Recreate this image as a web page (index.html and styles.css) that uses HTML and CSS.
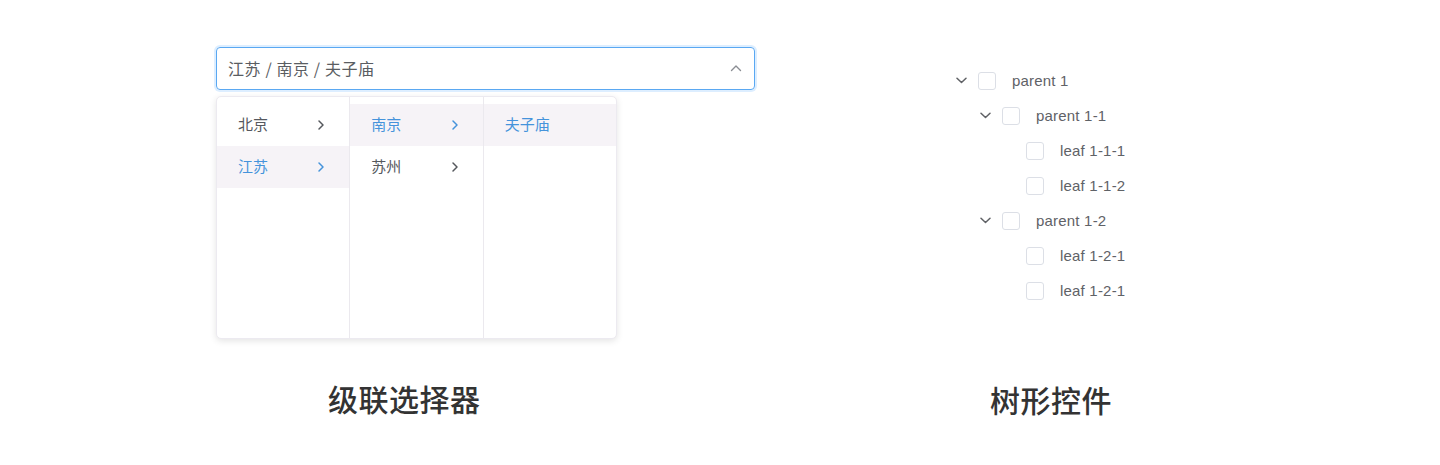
FILE: index.html
```html
<!DOCTYPE html>
<html lang="zh">
<head>
<meta charset="utf-8">
<link rel="stylesheet" href="styles.css">
</head>
<body>
<div class="page">
  <section class="demo demo-cascader">
    <div class="cascader">
      <div class="cas-input">
        <span class="cas-value">江苏 / 南京 / 夫子庙</span>
        <svg class="cas-caret" width="12" height="8" viewBox="0 0 12 8"><path d="M1.5 6.5 L6 2 L10.5 6.5" fill="none" stroke="#8a8d93" stroke-width="1.4" stroke-linecap="round" stroke-linejoin="round"/></svg>
      </div>
      <div class="cas-menu">
        <ul class="cas-col">
          <li class="cas-item"><span>北京</span><svg class="arr" width="8" height="12" viewBox="0 0 8 12"><path d="M2 2 L6 6 L2 10" fill="none" stroke="currentColor" stroke-width="1.5" stroke-linecap="round" stroke-linejoin="round"/></svg></li>
          <li class="cas-item active"><span>江苏</span><svg class="arr" width="8" height="12" viewBox="0 0 8 12"><path d="M2 2 L6 6 L2 10" fill="none" stroke="currentColor" stroke-width="1.5" stroke-linecap="round" stroke-linejoin="round"/></svg></li>
        </ul>
        <ul class="cas-col">
          <li class="cas-item active"><span>南京</span><svg class="arr" width="8" height="12" viewBox="0 0 8 12"><path d="M2 2 L6 6 L2 10" fill="none" stroke="currentColor" stroke-width="1.5" stroke-linecap="round" stroke-linejoin="round"/></svg></li>
          <li class="cas-item"><span>苏州</span><svg class="arr" width="8" height="12" viewBox="0 0 8 12"><path d="M2 2 L6 6 L2 10" fill="none" stroke="currentColor" stroke-width="1.5" stroke-linecap="round" stroke-linejoin="round"/></svg></li>
        </ul>
        <ul class="cas-col">
          <li class="cas-item active"><span>夫子庙</span></li>
        </ul>
      </div>
    </div>
    <h2 class="demo-title title-cascader">级联选择器</h2>
  </section>

  <section class="demo demo-tree">
    <ul class="tree">
      <li class="node lv0"><span class="chev"><svg width="11" height="7" viewBox="0 0 11 7"><path d="M1 1.2 L5.5 5.5 L10 1.2" fill="none" stroke="#606266" stroke-width="1.5" stroke-linecap="round" stroke-linejoin="round"/></svg></span><span class="cb"></span><span class="label">parent 1</span></li>
      <li class="node lv1"><span class="chev"><svg width="11" height="7" viewBox="0 0 11 7"><path d="M1 1.2 L5.5 5.5 L10 1.2" fill="none" stroke="#606266" stroke-width="1.5" stroke-linecap="round" stroke-linejoin="round"/></svg></span><span class="cb"></span><span class="label">parent 1-1</span></li>
      <li class="node lv2"><span class="chev"></span><span class="cb"></span><span class="label">leaf 1-1-1</span></li>
      <li class="node lv2"><span class="chev"></span><span class="cb"></span><span class="label">leaf 1-1-2</span></li>
      <li class="node lv1"><span class="chev"><svg width="11" height="7" viewBox="0 0 11 7"><path d="M1 1.2 L5.5 5.5 L10 1.2" fill="none" stroke="#606266" stroke-width="1.5" stroke-linecap="round" stroke-linejoin="round"/></svg></span><span class="cb"></span><span class="label">parent 1-2</span></li>
      <li class="node lv2"><span class="chev"></span><span class="cb"></span><span class="label">leaf 1-2-1</span></li>
      <li class="node lv2"><span class="chev"></span><span class="cb"></span><span class="label">leaf 1-2-1</span></li>
    </ul>
    <h2 class="demo-title title-tree">树形控件</h2>
  </section>
</div>
</body>
</html>
```

FILE: styles.css
```css
html, body {
  margin: 0;
  padding: 0;
  background: #ffffff;
}
body {
  width: 1440px;
  height: 465px;
  font-family: "Liberation Sans", "Noto Sans CJK SC", sans-serif;
  color: #606266;
}
ul { list-style: none; margin: 0; padding: 0; }
h2 { margin: 0; }

.page {
  display: flex;
  align-items: flex-start;
}

/* ---------- cascader ---------- */
.demo-cascader {
  margin-left: 216px;
  padding-top: 47px;
  width: 539px;
}
.cascader {
  display: flex;
  flex-direction: column;
  gap: 6px;
}
.cas-input {
  box-sizing: border-box;
  height: 43px;
  border: 1px solid #5aa8f2;
  border-radius: 4px;
  box-shadow: 0 0 0 2px rgba(64, 158, 255, 0.18);
  display: flex;
  align-items: center;
  justify-content: space-between;
  padding: 0 12px 1px 11px;
  font-family: "Noto Sans CJK SC", sans-serif;
  font-size: 16px;
  color: #5a5d62;
}
.cas-value { letter-spacing: 0.6px; }
.cas-caret { display: block; }

.cas-menu {
  box-sizing: border-box;
  width: 401px;
  height: 243px;
  display: flex;
  border: 1px solid #eceaf0;
  border-radius: 5px;
  box-shadow: 0 2px 7px rgba(0, 0, 0, 0.11);
  background: #fff;
  overflow: hidden;
}
.cas-col {
  width: 134px;
  padding-top: 7px;
  border-right: 1px solid #ebe9ee;
}
.cas-col:last-child { border-right: none; }
.cas-item {
  box-sizing: border-box;
  height: 42px;
  display: flex;
  align-items: center;
  justify-content: space-between;
  padding: 0 24px 3px 21px;
  font-family: "Noto Sans CJK SC", sans-serif;
  font-size: 15px;
  color: #55585d;
}
.cas-item .arr { display: block; color: #55585d; margin-top: 2px; }
.cas-item.active {
  background: #f6f3f7;
  color: #4593db;
}
.cas-item.active .arr { color: #4593db; }

.demo-title {
  font-family: "Noto Sans CJK SC", sans-serif;
  font-size: 30px;
  font-weight: 500;
  line-height: 30px;
  color: #333333;
}
.title-cascader {
  margin-top: 44px;
  margin-left: 112px;
  letter-spacing: 0.5px;
}

/* ---------- tree ---------- */
.demo-tree {
  margin-left: 201px;
  padding-top: 63px;
}
.tree {
  display: flex;
  flex-direction: column;
}
.node {
  height: 35px;
  display: flex;
  align-items: center;
  font-size: 15px;
  color: #5f6267;
}
.node.lv0 { padding-left: 0; }
.node.lv1 { padding-left: 24px; }
.node.lv2 { padding-left: 48px; }
.chev {
  width: 22px;
  display: flex;
  align-items: center;
  justify-content: flex-start;
}
.chev svg { display: block; }
.cb {
  box-sizing: border-box;
  width: 18px;
  height: 18px;
  border: 1px solid #dcdfe6;
  border-radius: 3px;
  background: #fff;
  margin-right: 16px;
}
.label { white-space: nowrap; letter-spacing: 0.2px; }

.title-tree {
  margin-top: 76px;
  margin-left: 34px;
  letter-spacing: 0.5px;
}
```
